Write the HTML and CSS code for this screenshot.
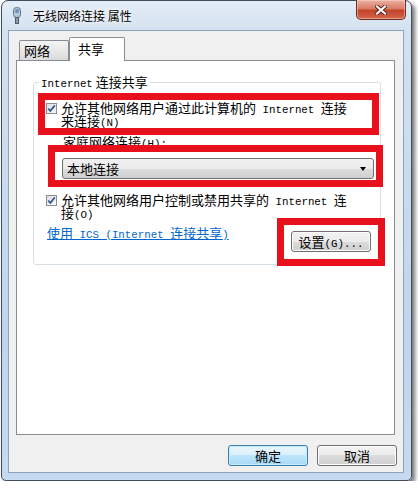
FILE: index.html
```html
<!DOCTYPE html>
<html lang="zh-CN">
<head>
  <meta charset="UTF-8">
  <title>无线网络连接 属性</title>
  <link rel="stylesheet" href="styles.css">
</head>
<body>

  <div class="window">
    <div class="titlebar">
      <svg class="app-icon" width="8" height="17" viewBox="0 0 8 17">
        <rect x="0.5" y="0.5" width="7" height="10" rx="3" fill="#b9c8d8" stroke="#5d7288"/>
        <rect x="2" y="2" width="4" height="4" rx="1.5" fill="#6f93bb"/>
        <rect x="2.5" y="10.5" width="3" height="6" fill="#8c9aa8" stroke="#4f5c69"/>
      </svg>
      <span class="title">无线网络连接 属性</span>
      <div class="close">
        <svg width="12" height="10" viewBox="0 0 12 10">
          <path d="M2 1.5 L10 8.5 M10 1.5 L2 8.5" stroke="#5b2015" stroke-width="4" stroke-linecap="square"/>
          <path d="M2 1.5 L10 8.5 M10 1.5 L2 8.5" stroke="#fff" stroke-width="2.2" stroke-linecap="square"/>
        </svg>
      </div>
    </div>

    <div class="client">
      <div class="tabs">
        <div class="tab">网络</div>
        <div class="tab active">共享</div>
      </div>

      <div class="panel">
        <fieldset class="group">
          <legend><span class="en">Internet</span> 连接共享</legend>

          <div class="check-row">
            <span class="checkbox">
              <svg width="9" height="9" viewBox="0 0 9 9"><path d="M1.2 4.6 L3.4 6.9 L7.8 1.4" fill="none" stroke="#3b5796" stroke-width="1.7"/></svg>
            </span>
            <span class="check-text">允许其他网络用户通过此计算机的<span class="en"> Internet </span>连接来连接<span class="en">(N)</span></span>
          </div>

          <div class="home-label">家庭网络连接<span class="en">(H):</span></div>
          <div class="combo">
            <span>本地连接</span>
            <span class="arrow"></span>
          </div>

          <div class="check-row second">
            <span class="checkbox">
              <svg width="9" height="9" viewBox="0 0 9 9"><path d="M1.2 4.6 L3.4 6.9 L7.8 1.4" fill="none" stroke="#3b5796" stroke-width="1.7"/></svg>
            </span>
            <span class="check-text">允许其他网络用户控制或禁用共享的<span class="en"> Internet </span>连接<span class="en">(O)</span></span>
          </div>

          <div class="link-row">
            <a class="ics-link" href="#">使用<span class="en"> ICS (Internet </span>连接共享<span class="en">)</span></a>
            <button class="btn settings">设置<span class="en">(G)...</span></button>
          </div>
        </fieldset>

        <!-- red marks drawn over the dialog -->
        <div class="mark mark-share"></div>
        <div class="mark mark-home"></div>
        <div class="mark mark-settings"></div>
      </div>

      <div class="actions">
        <button class="btn default">确定</button>
        <button class="btn">取消</button>
      </div>
    </div>
  </div>

</body>
</html>
```

FILE: styles.css
```css
body {
  margin: 0;
  background: #fff;
  font-family: "Noto Sans CJK SC", sans-serif;
  font-size: 13px;
  line-height: 13px;
  color: #000;
}
/* half-width latin, kept inside the CJK line box */
.en {
  font-family: "Liberation Mono", monospace;
  font-size: 10.8px;
  line-height: 0;
}

.window {
  margin-left: 1px;
  width: 409px;
  height: 479px;
  border: 1px solid #3f4d5e;
  border-radius: 7px 7px 5px 5px;
  background: linear-gradient(#e4edf7, #d3e1f0 30px, #c0d5ec 70%, #c7daef);
  box-shadow: 3px 3px 4px rgba(0,0,0,0.55);
  display: flex;
  flex-direction: column;
}

.titlebar {
  height: 29px;
  display: flex;
  align-items: center;
  padding-left: 11px;
}
.app-icon { flex: none; }
.title {
  margin-left: 12px;
  font-size: 12px;
  line-height: 14px;
  text-shadow: 0 0 6px #fff, 0 0 3px #fff;
}
.close {
  align-self: flex-start;
  margin: -1px 5px 0 auto;
  width: 50px;
  height: 20px;
  box-sizing: border-box;
  border: 1px solid #6b2b20;
  border-top: 0;
  border-radius: 0 0 5px 5px;
  background: linear-gradient(#eab2a4, #d97c66 45%, #c4442a 55%, #d2654a);
  box-shadow: inset 0 0 0 1px rgba(255,220,210,0.5);
  display: flex;
  align-items: center;
  justify-content: center;
}

.client {
  flex: 1;
  margin: 0 7px 7px 6px;
  border: 1px solid #8da2bc;
  background: #f0f0f0;
  padding: 6px 8px 6px 7px;
  display: flex;
  flex-direction: column;
}

.tabs {
  height: 23px;
  display: flex;
  align-items: flex-end;
  padding-left: 3px;
}
.tab {
  box-sizing: border-box;
  width: 50px;
  height: 20px;
  padding: 3px 4px 0;
  border: 1px solid #898c95;
  border-bottom: 0;
  border-radius: 2px 2px 0 0;
  background: linear-gradient(#f3f3f3, #e8e8e8 50%, #dadada);
}
.tab.active {
  width: 56px;
  height: 24px;
  padding: 4px 8px 0;
  margin-bottom: -1px;
  background: #fff;
  position: relative;
  z-index: 1;
}

.panel {
  flex: 1;
  border: 1px solid #898c95;
  background: #fff;
  padding: 14px 13px 0 16px;
  position: relative;
}

.group {
  margin: 0;
  min-width: 0;
  padding: 12px 9px 12px 12px;
  border: 1px solid #d5dfe5;
  border-radius: 3px;
}
.group legend {
  margin-left: -7px;
  padding: 0 2px;
  line-height: 14px;
}

.check-row {
  display: flex;
  align-items: flex-start;
  gap: 4px;
}
.check-row.second { margin-top: 14px; }
.checkbox {
  flex: none;
  box-sizing: border-box;
  width: 11px;
  height: 11px;
  margin-top: 2px;
  border: 1px solid #8e8f8f;
  background: linear-gradient(135deg, #dcdfe3, #f8f8f8);
  display: flex;
  align-items: center;
  justify-content: center;
}
.check-text { width: 288px; }

.home-label {
  margin: 8px 0 0 17px;
}
.combo {
  box-sizing: border-box;
  width: 312px;
  height: 21px;
  margin: 10px 0 0 16px;
  padding: 0 7px 0 4px;
  border: 1px solid #707070;
  border-radius: 3px;
  background: linear-gradient(#f2f2f2, #ebebeb 50%, #dddddd 50%, #cfcfcf);
  display: flex;
  align-items: center;
  justify-content: space-between;
}
.arrow {
  border-left: 3.5px solid transparent;
  border-right: 3.5px solid transparent;
  border-top: 4px solid #000;
}

.link-row {
  margin-top: 7px;
  display: flex;
  align-items: flex-start;
}
.ics-link {
  margin-left: 1px;
  color: #0066cc;
  text-decoration: underline;
}

.btn {
  box-sizing: border-box;
  width: 80px;
  height: 21px;
  padding: 0;
  border: 1px solid #707070;
  border-radius: 3px;
  background: linear-gradient(#f2f2f2, #ebebeb 50%, #dddddd 50%, #cfcfcf);
  box-shadow: inset 0 0 0 1px #fcfcfc;
  font-family: inherit;
  font-size: 13px;
  line-height: 13px;
  color: #000;
}
.btn.settings {
  margin: 5px 0 0 auto;
}
.btn.default {
  border-color: #3c7fb1;
  background: linear-gradient(#eaf6fd, #d9f0fc 50%, #bee6fd 50%, #a7d9f5);
  box-shadow: inset 0 0 0 1px #c6ecfc;
}

.actions {
  margin: 10px -2px 0 0;
  display: flex;
  justify-content: flex-end;
  gap: 9px;
}

.mark {
  position: absolute;
  box-sizing: border-box;
  border: 7px solid #e8111b;
}
.mark-share {
  left: 21px;
  top: 32px;
  width: 341px;
  height: 42px;
}
.mark-home {
  left: 31px;
  top: 84px;
  width: 335px;
  height: 42px;
}
.mark-settings {
  left: 260px;
  top: 157px;
  width: 108px;
  height: 48px;
}
```
